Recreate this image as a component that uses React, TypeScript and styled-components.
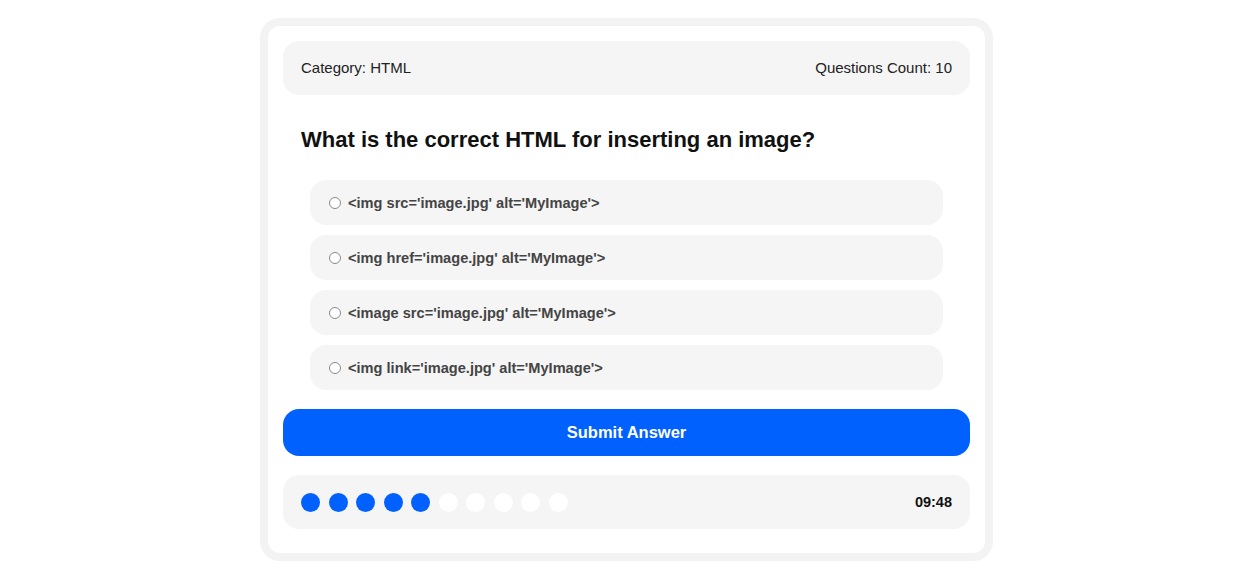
import React from "react";
import styled, { createGlobalStyle } from "styled-components";

const GlobalStyle = createGlobalStyle`
  html, body {
    margin: 0;
    padding: 0;
    background: #ffffff;
    font-family: "Liberation Sans", Arial, sans-serif;
  }
`;

const Page = styled.div`
  display: flex;
  justify-content: center;
  padding: 18px 0 0 13px;
`;

const Card = styled.div`
  width: 733px;
  box-sizing: border-box;
  border: 8px solid #f3f3f3;
  border-radius: 20px;
  background: #ffffff;
  padding: 15px 15px 24px;
  display: flex;
  flex-direction: column;
`;

const Bar = styled.div`
  display: flex;
  align-items: center;
  justify-content: space-between;
  height: 54px;
  padding: 0 18px;
  border-radius: 16px;
  background: #f5f5f5;
`;

const HeaderText = styled.span`
  font-size: 15px;
  color: #222222;
  margin-top: -2px;
`;

const Question = styled.h2`
  margin: 32px 0 0 18px;
  font-size: 22px;
  font-weight: 700;
  color: #111111;
  line-height: 26px;
`;

const Options = styled.div`
  display: flex;
  flex-direction: column;
  gap: 10px;
  margin: 27px 27px 0;
`;

const Option = styled.label`
  display: flex;
  align-items: center;
  gap: 7px;
  height: 45px;
  padding: 0 18px;
  border-radius: 16px;
  background: #f5f5f5;
  cursor: pointer;
`;

const Radio = styled.span`
  width: 10px;
  height: 10px;
  border-radius: 50%;
  border: 1px solid #8a8a8a;
  background: #ffffff;
  margin-left: 1px;
`;

const OptionText = styled.span`
  font-size: 14.6px;
  font-weight: 700;
  color: #444444;
`;

const Submit = styled.button`
  margin-top: 19px;
  height: 47px;
  border: none;
  border-radius: 16px;
  background: #0061fe;
  color: #ffffff;
  font-family: "Liberation Sans", Arial, sans-serif;
  font-size: 16.5px;
  font-weight: 700;
  cursor: pointer;
`;

const Footer = styled(Bar)`
  margin-top: 19px;
`;

const Dots = styled.div`
  display: flex;
  gap: 8.5px;
`;

const Dot = styled.span<{ done: boolean }>`
  width: 19px;
  height: 19px;
  border-radius: 50%;
  background: ${({ done }) => (done ? "#0061fe" : "#ffffff")};
`;

const Timer = styled.span`
  font-size: 14.5px;
  font-weight: 700;
  color: #111111;
`;

const answers = [
  "<img src='image.jpg' alt='MyImage'>",
  "<img href='image.jpg' alt='MyImage'>",
  "<image src='image.jpg' alt='MyImage'>",
  "<img link='image.jpg' alt='MyImage'>",
];

export default function App() {
  return (
    <>
      <GlobalStyle />
      <Page>
        <Card>
          <Bar>
            <HeaderText>Category: HTML</HeaderText>
            <HeaderText>Questions Count: 10</HeaderText>
          </Bar>
          <Question>What is the correct HTML for inserting an image?</Question>
          <Options>
            {answers.map((a) => (
              <Option key={a}>
                <Radio />
                <OptionText>{a}</OptionText>
              </Option>
            ))}
          </Options>
          <Submit>Submit Answer</Submit>
          <Footer>
            <Dots>
              {Array.from({ length: 10 }).map((_, i) => (
                <Dot key={i} done={i < 5} />
              ))}
            </Dots>
            <Timer>09:48</Timer>
          </Footer>
        </Card>
      </Page>
    </>
  );
}
